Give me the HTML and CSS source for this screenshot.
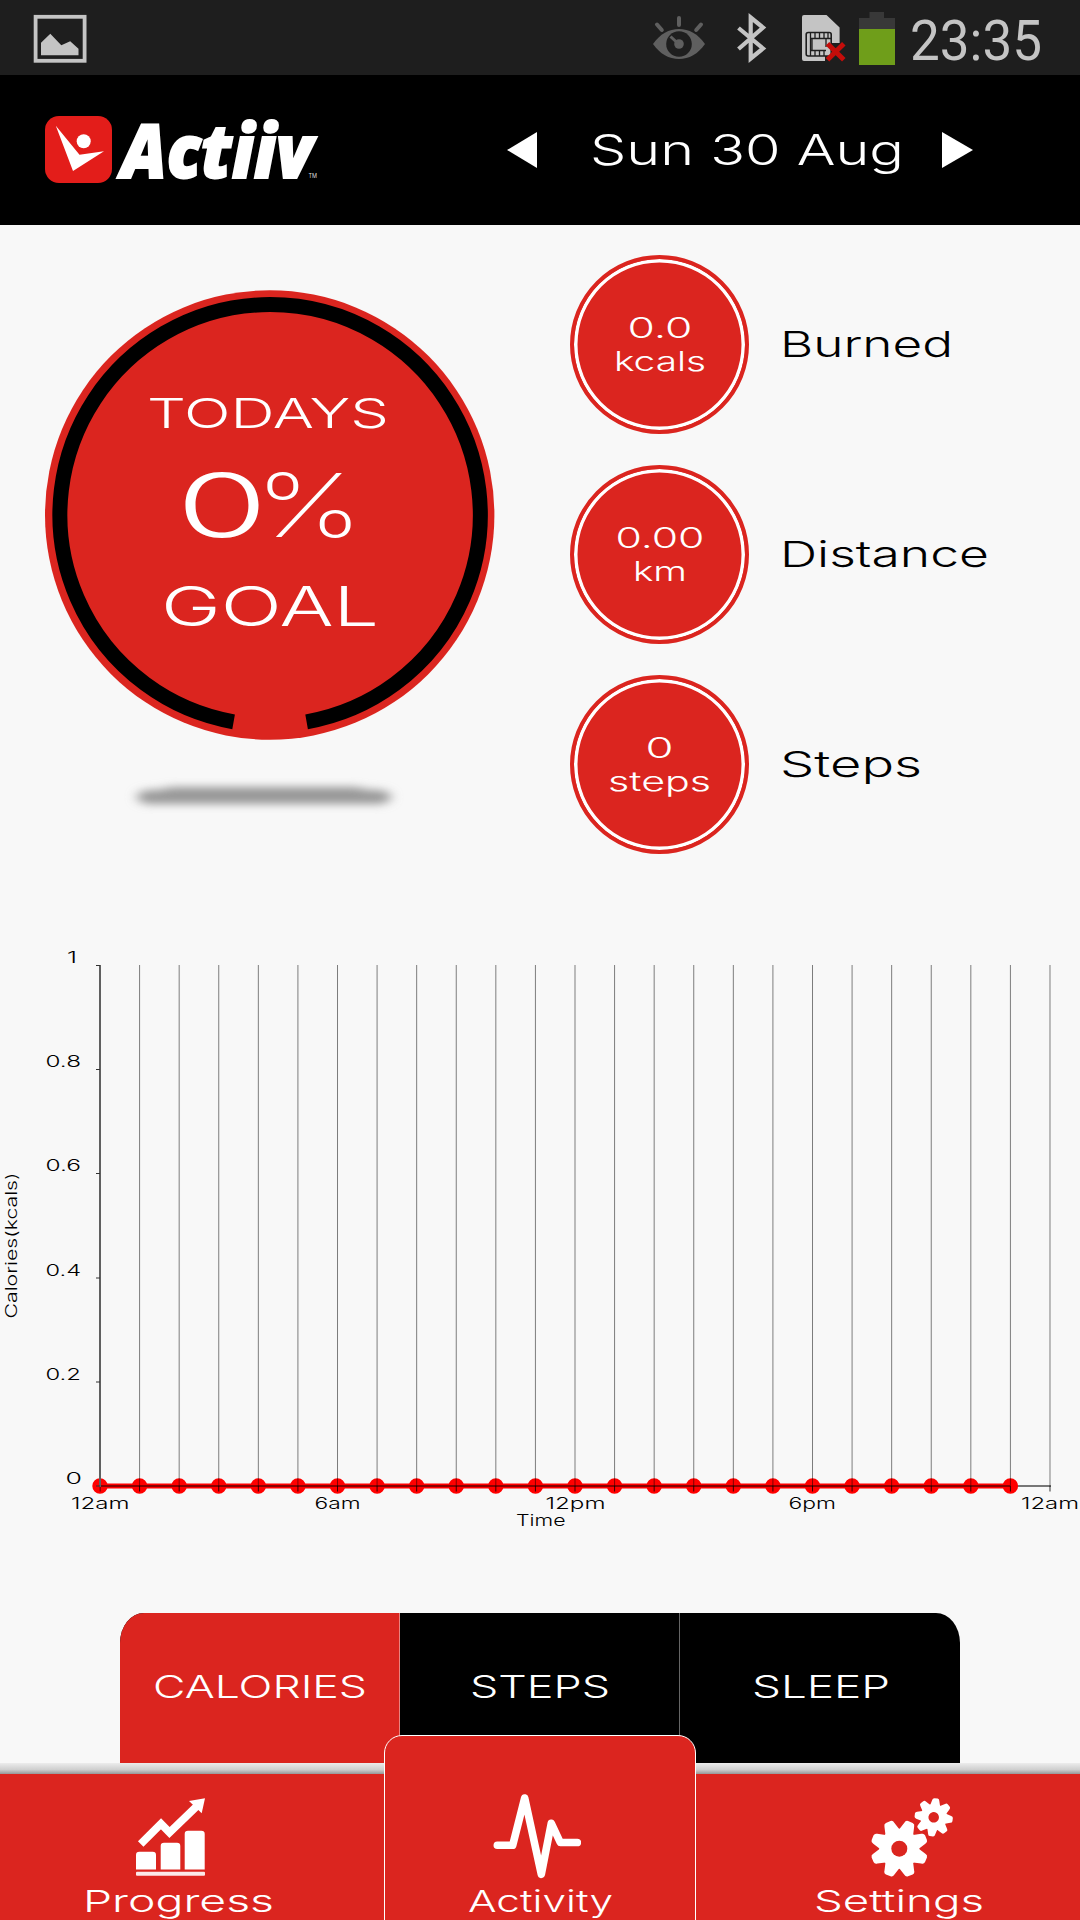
FILE: index.html
```
<!DOCTYPE html>
<html lang="en">
<head>
<meta charset="utf-8">
<title>Actiiv</title>
<link rel="stylesheet" href="styles.css">
</head>
<body>
<div class="status">
  <svg class="status-picture" width="54" height="50" viewBox="33 14 54 50">
    <rect x="35.6" y="16.8" width="49" height="44" fill="none" stroke="#c4c4c4" stroke-width="3.8"/>
    <path d="M41 55.3V42.7L50.3 33.7L61.3 45.3L70.2 41.3L78.5 48.7V55.3Z" fill="#c4c4c4"/>
  </svg>
  <svg class="status-icons" width="246" height="56" viewBox="651 11 246 56">
    <g stroke="#5f5f5f" stroke-width="4" stroke-linecap="round" fill="none">
      <path d="M679 18V25M657 24.500L661.800 30M701 24.500L696.200 30"/>
    </g>
    <path d="M653 44C660 34 669 29 679 29S698 34 705 44C698 54 689 59 679 59S660 54 653 44Z" fill="#5f5f5f"/>
    <circle cx="679" cy="44" r="12.800" fill="#1e1e1e"/>
    <circle cx="679" cy="44" r="4.800" fill="#5f5f5f"/>
    <path d="M670.500 36.500L677 42.500" stroke="#5f5f5f" stroke-width="3"/>
    <path d="M738.500 28L763 48.500L750.700 58.500V17.500L763 27.500L738.500 49" fill="none" stroke="#c4c4c4" stroke-width="4.200"/>
    <path d="M804 15H826.500L839.600 27.500V43H832V52L825 56V61H804Q802 61 802 59V17Q802 15 804 15Z" fill="#c4c4c4"/>
    <rect x="806.200" y="32.500" width="25" height="23.500" rx="2" fill="#c4c4c4" stroke="#1e1e1e" stroke-width="1.600"/>
    <path d="M810.500 33V56M811 38.500H831M811 50.500H826M815 33V38M819.500 33V38M824 33V38M828 33V38M815 51V56M819.500 51V56M824 51V56M812 39V50M826 39V47" stroke="#1e1e1e" stroke-width="1.300"/>
    <path d="M827.500 43.700L843.800 59.700M843.800 43.700L827.500 59.700" stroke="#c40d0a" stroke-width="5"/>
    <path d="M859 18H869.500V12H884V18H895V29H859Z" fill="#383838"/>
    <rect x="859" y="29" width="36" height="36" fill="#6f9e1a"/>
  </svg>
  <svg class="label clock" width="129" height="48"><text x="-2" y="43" textLength="132" lengthAdjust="spacingAndGlyphs">23:35</text></svg>
</div>

<header class="header">
  <svg class="logo" width="276" height="72" viewBox="45 114 276 72">
    <rect x="45" y="116" width="67" height="67" rx="14" fill="#e31d1a"/>
    <path d="M55.800 125.700L79.500 154.700L104 151.300L73 171Z" fill="#fff"/>
    <circle cx="83.700" cy="141.300" r="7" fill="#fff"/>
    <text class="brand" x="121" y="177.500" textLength="192" lengthAdjust="spacingAndGlyphs">Actiiv</text>
    <text class="trademark" x="308.500" y="178" textLength="8.500" lengthAdjust="spacingAndGlyphs">TM</text>
  </svg>
  <svg class="arrow-prev" width="30" height="36"><path d="M0 18L30 0V36Z" fill="#fff"/></svg>
  <svg class="label date" width="308" height="50"><text x="-3" y="37.500" textLength="314" lengthAdjust="spacingAndGlyphs">Sun 30 Aug</text></svg>
  <svg class="arrow-next" width="32" height="36"><path d="M31 18L0 0V36Z" fill="#fff"/></svg>
</header>

<section class="summary">
  <svg class="dial" width="450" height="530" viewBox="45 290 450 530">
    <defs><filter id="soft" x="-20%" y="-100%" width="140%" height="300%"><feGaussianBlur stdDeviation="6 4.500"/></filter></defs>
    <circle cx="269.700" cy="515" r="224.700" fill="#db251f"/>
    <path d="M233.600 721.800A210.200 210.200 0 1 1 306.600 721.800" fill="none" stroke="#000" stroke-width="15"/>
    <path d="M172 787H355L370 790H380Q391 792 391 797T380 804H148Q137 802 137 797T148 790H158Z" fill="#989898" filter="url(#soft)"/>
    <g class="dial-text">
      <text x="147" y="427.500" font-size="41" textLength="242" lengthAdjust="spacingAndGlyphs">TODAYS</text>
      <text class="dial-value" x="176" y="537" font-size="88" textLength="92" lengthAdjust="spacingAndGlyphs">0</text>
      <text class="dial-unit" x="255" y="537" font-size="88" textLength="108" lengthAdjust="spacingAndGlyphs">%</text>
      <text x="161" y="626" font-size="55" textLength="218" lengthAdjust="spacingAndGlyphs">GOAL</text>
    </g>
  </svg>
  <div class="metrics">
    <div class="metric">
      <div class="badge">
        <svg class="label value" width="60" height="24"><text x="-2.500" y="22" textLength="65" lengthAdjust="spacingAndGlyphs">0.0</text></svg>
        <svg class="label unit" width="88" height="30"><text x="-2" y="22" textLength="92" lengthAdjust="spacingAndGlyphs">kcals</text></svg>
      </div>
      <svg class="label name" width="167" height="50"><text x="-4" y="37" textLength="173" lengthAdjust="spacingAndGlyphs">Burned</text></svg>
    </div>
    <div class="metric">
      <div class="badge">
        <svg class="label value" width="84" height="24"><text x="-2.500" y="22" textLength="89" lengthAdjust="spacingAndGlyphs">0.00</text></svg>
        <svg class="label unit" width="50" height="30"><text x="-2" y="22" textLength="54" lengthAdjust="spacingAndGlyphs">km</text></svg>
      </div>
      <svg class="label name" width="204" height="50"><text x="-4" y="37" textLength="209" lengthAdjust="spacingAndGlyphs">Distance</text></svg>
    </div>
    <div class="metric">
      <div class="badge">
        <svg class="label value" width="23" height="24"><text x="-2.500" y="22" textLength="28" lengthAdjust="spacingAndGlyphs">0</text></svg>
        <svg class="label unit" width="101" height="30"><text x="-1" y="22" textLength="103" lengthAdjust="spacingAndGlyphs">steps</text></svg>
      </div>
      <svg class="label name" width="137" height="50"><text x="-4" y="37" textLength="142" lengthAdjust="spacingAndGlyphs">Steps</text></svg>
    </div>
  </div>
</section>

<svg class="chart" width="1080" height="620" viewBox="0 930 1080 620">
  <defs>
    <pattern id="hours" x="99.500" y="965" width="39.583" height="600" patternUnits="userSpaceOnUse"><rect width="1" height="600" fill="#000"/></pattern>
  </defs>
  <path d="M100 1486H1010" stroke="#f00" stroke-width="5"/>
  <path d="M100 1486H1011" stroke="#f00" stroke-width="15.400" stroke-linecap="round" stroke-dasharray="0 39.583"/>
  <path d="M100 1486H1010" stroke="#8b0000" stroke-width="2"/>
  <path d="M1018 1486H1051" stroke="#777" stroke-width="2"/>
  <rect x="139" y="965" width="912" height="521" fill="url(#hours)" opacity=".5"/>
  <rect x="99.500" y="1486" width="951.500" height="5.500" fill="url(#hours)" opacity=".8"/>
  <path d="M100 965V1487" stroke="#606060" stroke-width="2"/>
  <path d="M96 965.500H100M96 1069.500H100M96 1173.500H100M96 1278H100M96 1382H100M96 1486H100" stroke="#333" stroke-width="1"/>
  <g class="axis-text">
    <text x="67" y="962.500" textLength="10" lengthAdjust="spacingAndGlyphs">1</text>
    <text x="45.500" y="1067" textLength="35.500" lengthAdjust="spacingAndGlyphs">0.8</text>
    <text x="45.500" y="1171" textLength="35.500" lengthAdjust="spacingAndGlyphs">0.6</text>
    <text x="45.500" y="1275.500" textLength="35.500" lengthAdjust="spacingAndGlyphs">0.4</text>
    <text x="45.500" y="1379.500" textLength="35.500" lengthAdjust="spacingAndGlyphs">0.2</text>
    <text x="65.500" y="1484" textLength="16.500" lengthAdjust="spacingAndGlyphs">0</text>
    <text x="71" y="1509" textLength="58.500" lengthAdjust="spacingAndGlyphs">12am</text>
    <text x="314.500" y="1509" textLength="46" lengthAdjust="spacingAndGlyphs">6am</text>
    <text x="545.500" y="1509" textLength="60" lengthAdjust="spacingAndGlyphs">12pm</text>
    <text x="788.500" y="1509" textLength="47.500" lengthAdjust="spacingAndGlyphs">6pm</text>
    <text x="1021" y="1509" textLength="58" lengthAdjust="spacingAndGlyphs">12am</text>
    <text x="516" y="1525.500" textLength="49.500" lengthAdjust="spacingAndGlyphs">Time</text>
    <text transform="translate(17 1318.500) rotate(-90)" textLength="146" lengthAdjust="spacingAndGlyphs">Calories(kcals)</text>
  </g>
</svg>

<div class="tabs">
  <div class="tab tab-active"><svg class="label" width="210" height="34"><text x="-2" y="27" textLength="214" lengthAdjust="spacingAndGlyphs">CALORIES</text></svg></div>
  <div class="tab"><svg class="label" width="136" height="34"><text x="-2" y="27" textLength="140" lengthAdjust="spacingAndGlyphs">STEPS</text></svg></div>
  <div class="tab"><svg class="label" width="134" height="34"><text x="-1" y="27" textLength="138" lengthAdjust="spacingAndGlyphs">SLEEP</text></svg></div>
</div>

<div class="nav-shadow"></div>
<nav class="nav">
  <div class="nav-item nav-progress">
    <svg width="70" height="80" viewBox="136 1797 70 80" fill="#fff">
      <path d="M136 1869.500V1855Q136 1851.700 139.300 1851.700H152.700Q156 1851.700 156 1855V1869.500ZM160.700 1869.500V1846Q160.700 1842.700 164 1842.700H177Q180.300 1842.700 180.300 1846V1869.500ZM184.700 1869.500V1834Q184.700 1830.700 188 1830.700H201.400Q204.700 1830.700 204.700 1834V1869.500Z"/>
      <rect x="136" y="1871.700" width="69" height="4" rx="1" opacity=".9"/>
      <path d="M140.700 1844L161 1823.700L169.500 1832.500L197.500 1805.500" fill="none" stroke="#fff" stroke-width="7.800"/>
      <path d="M205 1798.300L189 1801L201.700 1813.300Z"/>
    </svg>
    <svg class="label" width="187" height="40"><text x="-4" y="25" textLength="191" lengthAdjust="spacingAndGlyphs">Progress</text></svg>
  </div>
  <div class="nav-item nav-current">
    <svg width="88" height="86" viewBox="493 1793 88 86">
      <path d="M497.300 1845.200H512.700L524.700 1798L541.300 1874.300L551.300 1823.300L560.300 1842.500H577.300" fill="none" stroke="#fff" stroke-width="7.600" stroke-linecap="round" stroke-linejoin="round"/>
    </svg>
    <svg class="label" width="143" height="40"><text x="-1" y="25" textLength="145" lengthAdjust="spacingAndGlyphs">Activity</text></svg>
  </div>
  <div class="nav-item nav-settings">
    <svg width="84" height="80" viewBox="870 1797 84 80">
      <defs>
        <path id="tooth" d="M-7.500 -18L-5.300 -26Q-5 -28.700 -2.500 -28.900H2.500Q5 -28.700 5.300 -26L7.500 -18L5 -6H-5Z"/>
        <g id="gear" fill="#fff">
          <circle r="14" fill="none" stroke="#fff" stroke-width="12"/>
          <use href="#tooth" transform="rotate(22.500)"/><use href="#tooth" transform="rotate(67.500)"/>
          <use href="#tooth" transform="rotate(112.500)"/><use href="#tooth" transform="rotate(157.500)"/>
          <use href="#tooth" transform="rotate(202.500)"/><use href="#tooth" transform="rotate(247.500)"/>
          <use href="#tooth" transform="rotate(292.500)"/><use href="#tooth" transform="rotate(337.500)"/>
          <circle r="8" fill="#db251f"/>
        </g>
      </defs>
      <use href="#gear" transform="translate(899.300 1848.700)"/>
      <use href="#gear" transform="translate(933.700 1817.300) rotate(-15.500) scale(.66)"/>
    </svg>
    <svg class="label" width="167" height="40"><text x="-3" y="25" textLength="170" lengthAdjust="spacingAndGlyphs">Settings</text></svg>
  </div>
</nav>
</body>
</html>
```
FILE: styles.css
```
* { box-sizing: border-box; }
body {
  margin: 0;
  width: 1080px;
  height: 1920px;
  overflow: hidden;
  display: flex;
  flex-direction: column;
  background: #f8f8f8;
  font-family: Inter, "Liberation Sans", sans-serif;
  font-weight: 300;
}
svg { display: block; flex: none; }
.label { overflow: visible; fill: #fff; }

.status {
  flex: none;
  height: 75px;
  display: flex;
  align-items: flex-start;
  background: #1e1e1e;
}
.status-picture { margin: 14px 0 0 33px; }
.status-icons { margin: 11px 0 0 564px; }
.clock {
  margin: 17px 0 0 15px;
  font-family: Roboto, sans-serif;
  font-size: 55px;
  font-weight: 400;
  fill: #c4c4c4;
}

.header {
  flex: none;
  height: 150px;
  display: flex;
  align-items: center;
  padding-left: 45px;
  background: #000;
}
.logo { overflow: visible; }
.brand {
  font-family: "Open Sans", sans-serif;
  font-size: 75px;
  font-weight: 800;
  font-style: italic;
  fill: #fff;
  stroke: #fff;
  stroke-width: 2px;
}
.trademark { font-size: 6.500px; font-weight: 400; fill: #ddd; }
.arrow-prev { margin-left: 186px; }
.date { margin: 4px 41px 0 56px; font-size: 42.500px; }

.summary {
  flex: none;
  height: 705px;
  display: flex;
  align-items: flex-start;
  padding: 30px 0 0 45px;
}
.dial { margin-top: 35px; }
.dial-text { fill: #fff; }
.dial-value { font-weight: 300; }
.dial-unit { font-weight: 200; }
.metrics {
  display: flex;
  flex-direction: column;
  gap: 31px;
  margin-left: 75px;
}
.metric { display: flex; align-items: center; gap: 35px; }
.badge {
  width: 179px;
  height: 179px;
  padding-top: 57px;
  display: flex;
  flex-direction: column;
  align-items: center;
  gap: 9px;
  border: 4px solid #db251f;
  border-radius: 50%;
  background: #db251f;
  box-shadow: inset 0 0 0 3.500px #fff;
}
.value { font-size: 28px; }
.unit { font-size: 27px; }
.name { font-size: 36px; font-weight: 350; fill: #000; }

.chart { height: 620px; }
.axis-text { font-size: 15.500px; font-weight: 300; fill: #000; }

.tabs {
  flex: none;
  width: 840px;
  height: 150px;
  margin: 63px 0 0 120px;
  display: grid;
  grid-template-columns: repeat(3, 1fr);
  overflow: hidden;
  border-radius: 24px 24px 0 0 / 30px 30px 0 0;
  background: #000;
}
.tab {
  display: flex;
  justify-content: center;
  padding-top: 58px;
  font-size: 30.500px;
  border-right: 1px solid #666;
}
.tab:last-child { border-right: 0; }
.tab-active { background: #db251f; border-right-color: #e9837f; }

.nav-shadow {
  flex: none;
  height: 11px;
  background: linear-gradient(#ececec, #cfcfcf 60%, #979797);
}
.nav {
  flex: none;
  height: 146px;
  display: grid;
  grid-template-columns: 384px 312px 384px;
  background: #db251f;
}
.nav-item {
  display: flex;
  flex-direction: column;
  align-items: center;
  font-size: 30px;
}
.nav-progress { padding: 23px 24px 0 0; gap: 10px; }
.nav-progress svg:first-child { margin-right: 18px; }
.nav-settings { padding: 23px 0 0 24px; gap: 10px; }
.nav-settings svg:first-child { margin-left: 24px; }
.nav-current {
  height: 200px;
  margin-top: -39px;
  padding-top: 57px;
  gap: 8px;
  background: #db251f;
  border: 1px solid #fff;
  border-radius: 18px 18px 0 0;
}
.nav-current svg:first-child { margin-right: 6px; }
```
